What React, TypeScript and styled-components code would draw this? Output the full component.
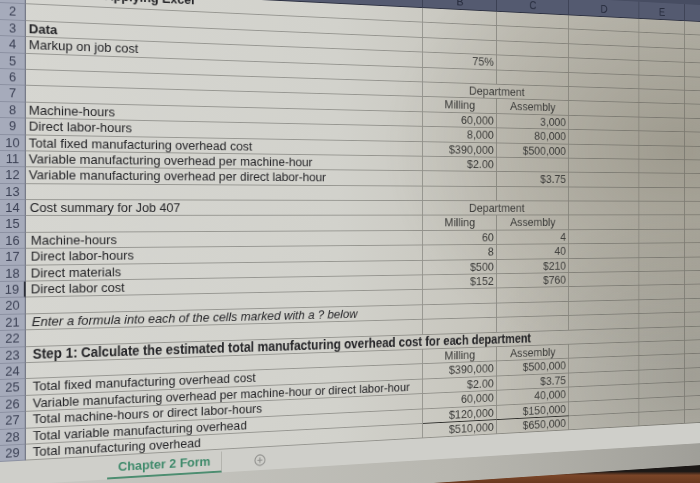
import React from 'react';
import styled, { createGlobalStyle } from 'styled-components';

const GlobalStyle = createGlobalStyle`
  *, *::before, *::after { box-sizing: border-box; }
  html, body { margin: 0; padding: 0; width: 700px; height: 483px; overflow: hidden; background: #1a1614; }
  #root { width: 700px; height: 483px; }
`;

const COLS = '26px 442px 92px 93px 94px 63px 100px';
const LINE = 'rgba(70, 70, 64, 0.42)';

const Page = styled.div`
  width: 700px;
  height: 483px;
  overflow: hidden;
  background: linear-gradient(180deg, #1c1816 0%, #1c1816 97.6%, #7a4528 98.4%, #6a3a20 100%);
  font-family: "Liberation Sans", Arial, sans-serif;
`;

const Sheet = styled.div`
  width: 910px;
  margin-top: -75px;
  display: flex;
  flex-direction: column;
  transform-origin: 0 286px;
  transform: perspective(300px) rotateY(3.82deg);
`;

const TopBar = styled.div`
  height: 42px;
  background: #474d62;
`;

const HeaderRow = styled.div`
  display: grid;
  grid-template-columns: ${COLS};
  height: 20px;
  background: #545a70;
  border-bottom: 1px solid #2e3242;
`;

const HeaderCell = styled.div`
  border-right: 1px solid #3a3f52;
  color: #262b3c;
  font-size: 13px;
  line-height: 21px;
  text-align: center;
`;

const Body = styled.div`
  background:
    radial-gradient(ellipse 380px 260px at 88% 32%, rgba(95, 88, 70, 0.32), rgba(95, 88, 70, 0) 100%),
    radial-gradient(ellipse 300px 200px at 90% 88%, rgba(80, 78, 70, 0.25), rgba(80, 78, 70, 0) 100%),
    linear-gradient(90deg, #d6d6d1 0%, #d2d2cc 40%, #c3c1b8 65%, #b8b6ac 100%);
`;

const Row = styled.div`
  display: grid;
  grid-template-columns: ${COLS};
  height: 16.4px;
`;

const RowHead = styled.div<{ $active?: boolean }>`
  background: #a6abbb;
  border-right: ${p => (p.$active ? '2px solid #2c2f3a' : '1px solid #5f6476')};
  border-bottom: 1px solid #8c91a2;
  color: #3b4054;
  font-size: 13px;
  line-height: 15.4px;
  text-align: center;
`;

type Align = 'left' | 'right' | 'center';

const Cell = styled.div<{
  $align?: Align;
  $span?: number;
  $bold?: boolean;
  $italic?: boolean;
  $rule?: boolean;
  $num?: boolean;
  $indent?: number;
  $size?: number;
  $lh?: number;
}>`
  grid-column: span ${p => p.$span ?? 1};
  border-right: 1px solid ${LINE};
  border-bottom: ${p => (p.$rule ? '1.5px solid #2f2f2c' : `1px solid ${LINE}`)};
  padding: 0 3px 0 ${p => 3 + (p.$indent ?? 0)}px;
  font-size: ${p => p.$size ?? 13.5}px;
  line-height: ${p => p.$lh ?? 15.4}px;
  white-space: nowrap;
  overflow: visible;
  text-align: ${p => p.$align ?? 'left'};
  font-weight: ${p => (p.$bold ? 700 : 400)};
  font-style: ${p => (p.$italic ? 'italic' : 'normal')};
  color: ${p => (p.$num ? '#3c3c3a' : '#242427')};
`;

const TabBar = styled.div`
  height: 24px;
  display: flex;
  align-items: stretch;
  padding: 2px 0 0 110px;
  background: #cfcfca;
`;

const Tab = styled.div`
  width: 124px;
  text-align: center;
  color: #3f8a6b;
  font-weight: 700;
  font-size: 13.5px;
  line-height: 19px;
  border-bottom: 2px solid #4c8d70;
  border-right: 1px solid #b4b4ae;
`;

const AddSheet = styled.div`
  margin-left: 36px;
  display: flex;
  align-items: center;
`;

const BottomStrip = styled.div`
  height: 26px;
  background: linear-gradient(90deg, #c9c9c4 0%, #b8b7b0 55%, #9a9993 100%);
`;

type RowSpec = {
  n: number;
  a?: string;
  aBold?: boolean;
  aItalic?: boolean;
  aSpan?: number;
  aIndent?: number;
  aSize?: number;
  aLh?: number;
  b?: string;
  c?: string;
  bc?: string;
  center?: boolean;
  rule?: boolean;
  active?: boolean;
};

const rows: RowSpec[] = [
  { n: 1, a: 'Applying Excel', aBold: true, aIndent: 78, aLh: 8 },
  { n: 2 },
  { n: 3, a: 'Data', aBold: true },
  { n: 4, a: 'Markup on job cost', b: '75%' },
  { n: 5 },
  { n: 6, bc: 'Department' },
  { n: 7, b: 'Milling', c: 'Assembly', center: true },
  { n: 8, a: 'Machine-hours', b: '60,000', c: '3,000' },
  { n: 9, a: 'Direct labor-hours', b: '8,000', c: '80,000' },
  { n: 10, a: 'Total fixed manufacturing overhead cost', b: '$390,000', c: '$500,000' },
  { n: 11, a: 'Variable manufacturing overhead per machine-hour', b: '$2.00' },
  { n: 12, a: 'Variable manufacturing overhead per direct labor-hour', c: '$3.75' },
  { n: 13 },
  { n: 14, a: 'Cost summary for Job 407', aIndent: 1, bc: 'Department' },
  { n: 15, b: 'Milling', c: 'Assembly', center: true },
  { n: 16, a: 'Machine-hours', aIndent: 2, b: '60', c: '4' },
  { n: 17, a: 'Direct labor-hours', aIndent: 2, b: '8', c: '40' },
  { n: 18, a: 'Direct materials', aIndent: 2, b: '$500', c: '$210' },
  { n: 19, a: 'Direct labor cost', aIndent: 2, b: '$152', c: '$760', active: true },
  { n: 20 },
  { n: 21, a: 'Enter a formula into each of the cells marked with a ? below', aItalic: true, aIndent: 3 },
  { n: 22 },
  {
    n: 23,
    a: 'Step 1: Calculate the estimated total manufacturing overhead cost for each department',
    aBold: true,
    aSpan: 4,
    aIndent: 4,
    aSize: 13.8,
  },
  { n: 24, b: 'Milling', c: 'Assembly', center: true },
  { n: 25, a: 'Total fixed manufacturing overhead cost', aIndent: 4, b: '$390,000', c: '$500,000' },
  {
    n: 26,
    a: 'Variable manufacturing overhead per machine-hour or direct labor-hour',
    aIndent: 4,
    aSize: 13.3,
    b: '$2.00',
    c: '$3.75',
  },
  { n: 27, a: 'Total machine-hours or direct labor-hours', aIndent: 4, b: '60,000', c: '40,000' },
  { n: 28, a: 'Total variable manufacturing overhead', aIndent: 4, b: '$120,000', c: '$150,000', rule: true },
  { n: 29, a: 'Total manufacturing overhead', aIndent: 4, b: '$510,000', c: '$650,000' },
];

const SheetRow: React.FC<{ r: RowSpec }> = ({ r }) => {
  const span = r.aSpan ?? 1;
  const cells: React.ReactNode[] = [];
  cells.push(
    <Cell
      key="a"
      $span={span}
      $bold={r.aBold}
      $italic={r.aItalic}
      $indent={r.aIndent}
      $size={r.aSize}
      $lh={r.aLh}
    >
      {r.a ?? ''}
    </Cell>,
  );
  if (span === 1) {
    if (r.bc !== undefined) {
      cells.push(
        <Cell key="bc" $span={2} $align="center" $num>
          {r.bc}
        </Cell>,
      );
    } else {
      const al: Align = r.center ? 'center' : 'right';
      cells.push(
        <Cell key="b" $align={al} $num $rule={r.rule}>
          {r.b ?? ''}
        </Cell>,
      );
      cells.push(
        <Cell key="c" $align={al} $num $rule={r.rule}>
          {r.c ?? ''}
        </Cell>,
      );
    }
    cells.push(<Cell key="d" />);
  }
  cells.push(<Cell key="e" />);
  cells.push(<Cell key="f" />);
  return (
    <Row>
      <RowHead $active={r.active}>{r.n}</RowHead>
      {cells}
    </Row>
  );
};

const PlusCircle = () => (
  <svg width="13" height="13" viewBox="0 0 13 13" aria-hidden="true">
    <circle cx="6.5" cy="6.5" r="5.6" fill="none" stroke="#8f8f8c" strokeWidth="1.1" />
    <path d="M6.5 3.6v5.8M3.6 6.5h5.8" stroke="#8f8f8c" strokeWidth="1.2" />
  </svg>
);

export default function App() {
  return (
    <>
      <GlobalStyle />
      <Page>
        <Sheet>
          <TopBar />
          <HeaderRow>
            {['', 'A', 'B', 'C', 'D', 'E', 'F'].map(l => (
              <HeaderCell key={l || 'corner'}>{l}</HeaderCell>
            ))}
          </HeaderRow>
          <Body>
            {rows.map(r => (
              <SheetRow key={r.n} r={r} />
            ))}
          </Body>
          <TabBar>
            <Tab>Chapter 2 Form</Tab>
            <AddSheet>
              <PlusCircle />
            </AddSheet>
          </TabBar>
          <BottomStrip />
        </Sheet>
      </Page>
    </>
  );
}
